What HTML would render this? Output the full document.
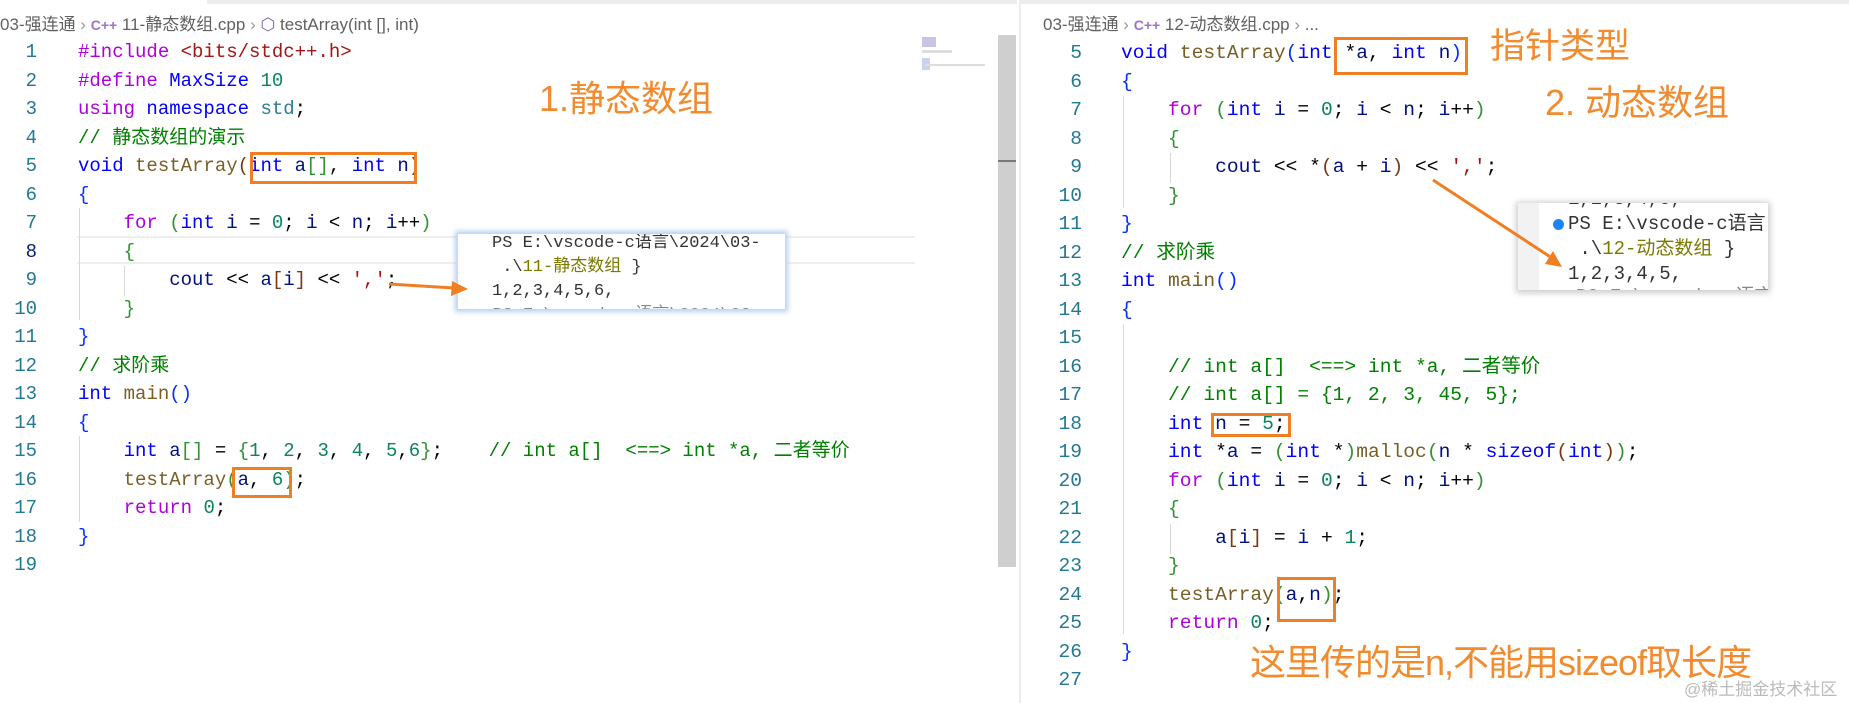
<!DOCTYPE html>
<html><head><meta charset="utf-8"><style>
*{margin:0;padding:0;box-sizing:border-box}
body{width:1849px;height:703px;background:#fff;position:relative;overflow:hidden;font-family:"Liberation Sans","Noto Sans CJK SC",sans-serif}
.ln{position:absolute;font-family:"Liberation Mono","Noto Sans CJK SC",monospace;font-size:19px;color:#237893;text-align:right;width:40px;line-height:28px}
.cd{position:absolute;font-family:"Liberation Mono","Noto Sans CJK SC",monospace;font-size:19px;color:#000;white-space:pre;line-height:28px}
.r .cd,.r .ln{font-size:19.6px}
.k{color:#0000ff}.c{color:#af00db}.f{color:#795e26}.v{color:#001080}.n{color:#098658}.s{color:#a31515}.m{color:#008000}.t{color:#267f99}
.b1{color:#0431fa}.b2{color:#319331}.b3{color:#7b3814}
.box{position:absolute;border:3px solid #f07f24}
.ann{position:absolute;color:#f28a2e;font-family:"Liberation Sans","Noto Sans CJK SC",sans-serif;white-space:nowrap}
.crumb{position:absolute;top:10px;font-size:17px;color:#616161;white-space:nowrap}
.guide{position:absolute;width:1px;background:#d8d8d8}
.term{position:absolute;background:#fff;overflow:hidden;font-family:"Liberation Mono","Noto Sans CJK SC",monospace;font-size:17px;color:#333;white-space:pre;line-height:24px}
</style></head><body>
<div style="position:absolute;left:207px;top:0;width:810px;height:4px;background:#ececec"></div>
<div style="position:absolute;left:1021px;top:0;width:828px;height:4px;background:#ececec"></div>
<div class="crumb" style="left:0">03-强连通 <span style="color:#999">›</span> <b style="color:#a074c4;font-size:14px">C++</b> 11-静态数组.cpp <span style="color:#999">›</span> <span style="color:#7a5fb0">⬡</span> testArray(int [], int)</div>
<div class="crumb" style="left:1043px">03-强连通 <span style="color:#999">›</span> <b style="color:#a074c4;font-size:14px">C++</b> 12-动态数组.cpp <span style="color:#999">›</span> ...</div>

<div style="position:absolute;left:998px;top:35px;width:18px;height:532px;background:#cfcfcf"></div>
<div style="position:absolute;left:998px;top:160px;width:18px;height:2px;background:#777"></div>
<div style="position:absolute;left:1019px;top:0;width:2px;height:703px;background:#ececec"></div>
<div style="position:absolute;left:922px;top:37px;width:14px;height:10px;background:#c9c3e6"></div>
<div style="position:absolute;left:922px;top:50px;width:30px;height:3px;background:#ddd"></div>
<div style="position:absolute;left:922px;top:58px;width:8px;height:12px;background:#c9d3ec"></div>
<div style="position:absolute;left:925px;top:64px;width:60px;height:2px;background:#ddd"></div>

<div style="position:absolute;left:77px;top:236px;width:838px;height:2px;background:#eee"></div>
<div style="position:absolute;left:77px;top:262px;width:838px;height:2px;background:#eee"></div>

<div class="guide" style="left:79px;top:208px;height:112px"></div>
<div class="guide" style="left:124px;top:266px;height:30px"></div>
<div class="guide" style="left:79px;top:436px;height:86px"></div>
<div class="guide" style="left:1123px;top:96px;height:112px"></div>
<div class="guide" style="left:1170px;top:153px;height:30px"></div>
<div class="guide" style="left:1123px;top:324px;height:310px"></div>
<div class="guide" style="left:1170px;top:524px;height:30px"></div>

<div>
<div class="ln" style="left:-3px;top:38px">1</div><div class="cd" style="left:78px;top:38px"><span class="c">#include</span> <span class="s">&lt;bits/stdc++.h&gt;</span></div>
<div class="ln" style="left:-3px;top:66.5px">2</div><div class="cd" style="left:78px;top:66.5px"><span class="c">#define</span> <span class="k">MaxSize</span> <span class="n">10</span></div>
<div class="ln" style="left:-3px;top:95px">3</div><div class="cd" style="left:78px;top:95px"><span class="c">using</span> <span class="k">namespace</span> <span class="t">std</span>;</div>
<div class="ln" style="left:-3px;top:123.5px">4</div><div class="cd" style="left:78px;top:123.5px"><span class="m">// 静态数组的演示</span></div>
<div class="ln" style="left:-3px;top:152px">5</div><div class="cd" style="left:78px;top:152px"><span class="k">void</span> <span class="f">testArray</span><span class="b3">(</span><span class="k">int</span> <span class="v">a</span><span class="b2">[]</span>, <span class="k">int</span> <span class="v">n</span><span class="b3">)</span></div>
<div class="ln" style="left:-3px;top:180.5px">6</div><div class="cd" style="left:78px;top:180.5px"><span class="b1">{</span></div>
<div class="ln" style="left:-3px;top:209px">7</div><div class="cd" style="left:78px;top:209px">    <span class="c">for</span> <span class="b2">(</span><span class="k">int</span> <span class="v">i</span> = <span class="n">0</span>; <span class="v">i</span> &lt; <span class="v">n</span>; <span class="v">i</span>++<span class="b2">)</span></div>
<div class="ln" style="left:-3px;top:237.5px;color:#0b216f">8</div><div class="cd" style="left:78px;top:237.5px">    <span class="b2">{</span></div>
<div class="ln" style="left:-3px;top:266px">9</div><div class="cd" style="left:78px;top:266px">        <span class="v">cout</span> &lt;&lt; <span class="v">a</span><span class="b3">[</span><span class="v">i</span><span class="b3">]</span> &lt;&lt; <span class="s">','</span>;</div>
<div class="ln" style="left:-3px;top:294.5px">10</div><div class="cd" style="left:78px;top:294.5px">    <span class="b2">}</span></div>
<div class="ln" style="left:-3px;top:323px">11</div><div class="cd" style="left:78px;top:323px"><span class="b1">}</span></div>
<div class="ln" style="left:-3px;top:351.5px">12</div><div class="cd" style="left:78px;top:351.5px"><span class="m">// 求阶乘</span></div>
<div class="ln" style="left:-3px;top:380px">13</div><div class="cd" style="left:78px;top:380px"><span class="k">int</span> <span class="f">main</span><span class="b1">()</span></div>
<div class="ln" style="left:-3px;top:408.5px">14</div><div class="cd" style="left:78px;top:408.5px"><span class="b1">{</span></div>
<div class="ln" style="left:-3px;top:437px">15</div><div class="cd" style="left:78px;top:437px">    <span class="k">int</span> <span class="v">a</span><span class="b2">[]</span> = <span class="b2">{</span><span class="n">1</span>, <span class="n">2</span>, <span class="n">3</span>, <span class="n">4</span>, <span class="n">5</span>,<span class="n">6</span><span class="b2">}</span>;    <span class="m">// int a[]  &lt;==&gt; int *a, 二者等价</span></div>
<div class="ln" style="left:-3px;top:465.5px">16</div><div class="cd" style="left:78px;top:465.5px">    <span class="f">testArray</span><span class="b2">(</span><span class="v">a</span>, <span class="n">6</span><span class="b2">)</span>;</div>
<div class="ln" style="left:-3px;top:494px">17</div><div class="cd" style="left:78px;top:494px">    <span class="c">return</span> <span class="n">0</span>;</div>
<div class="ln" style="left:-3px;top:522.5px">18</div><div class="cd" style="left:78px;top:522.5px"><span class="b1">}</span></div>
<div class="ln" style="left:-3px;top:551px">19</div>
</div>

<div class="r">
<div class="ln" style="left:1042px;top:39px">5</div><div class="cd" style="left:1121px;top:39px"><span class="k">void</span> <span class="f">testArray</span><span class="b1">(</span><span class="k">int</span> *<span class="v">a</span>, <span class="k">int</span> <span class="v">n</span><span class="b1">)</span></div>
<div class="ln" style="left:1042px;top:67.5px">6</div><div class="cd" style="left:1121px;top:67.5px"><span class="b1">{</span></div>
<div class="ln" style="left:1042px;top:96px">7</div><div class="cd" style="left:1121px;top:96px">    <span class="c">for</span> <span class="b2">(</span><span class="k">int</span> <span class="v">i</span> = <span class="n">0</span>; <span class="v">i</span> &lt; <span class="v">n</span>; <span class="v">i</span>++<span class="b2">)</span></div>
<div class="ln" style="left:1042px;top:124.5px">8</div><div class="cd" style="left:1121px;top:124.5px">    <span class="b2">{</span></div>
<div class="ln" style="left:1042px;top:153px">9</div><div class="cd" style="left:1121px;top:153px">        <span class="v">cout</span> &lt;&lt; *<span class="b3">(</span><span class="v">a</span> + <span class="v">i</span><span class="b3">)</span> &lt;&lt; <span class="s">','</span>;</div>
<div class="ln" style="left:1042px;top:181.5px">10</div><div class="cd" style="left:1121px;top:181.5px">    <span class="b2">}</span></div>
<div class="ln" style="left:1042px;top:210px">11</div><div class="cd" style="left:1121px;top:210px"><span class="b1">}</span></div>
<div class="ln" style="left:1042px;top:238.5px">12</div><div class="cd" style="left:1121px;top:238.5px"><span class="m">// 求阶乘</span></div>
<div class="ln" style="left:1042px;top:267px">13</div><div class="cd" style="left:1121px;top:267px"><span class="k">int</span> <span class="f">main</span><span class="b1">()</span></div>
<div class="ln" style="left:1042px;top:295.5px">14</div><div class="cd" style="left:1121px;top:295.5px"><span class="b1">{</span></div>
<div class="ln" style="left:1042px;top:324px">15</div>
<div class="ln" style="left:1042px;top:352.5px">16</div><div class="cd" style="left:1121px;top:352.5px">    <span class="m">// int a[]  &lt;==&gt; int *a, 二者等价</span></div>
<div class="ln" style="left:1042px;top:381px">17</div><div class="cd" style="left:1121px;top:381px">    <span class="m">// int a[] = {1, 2, 3, 45, 5};</span></div>
<div class="ln" style="left:1042px;top:409.5px">18</div><div class="cd" style="left:1121px;top:409.5px">    <span class="k">int</span> <span class="v">n</span> = <span class="n">5</span>;</div>
<div class="ln" style="left:1042px;top:438px">19</div><div class="cd" style="left:1121px;top:438px">    <span class="k">int</span> *<span class="v">a</span> = <span class="b2">(</span><span class="k">int</span> *<span class="b2">)</span><span class="f">malloc</span><span class="b2">(</span><span class="v">n</span> * <span class="k">sizeof</span><span class="b3">(</span><span class="k">int</span><span class="b3">)</span><span class="b2">)</span>;</div>
<div class="ln" style="left:1042px;top:466.5px">20</div><div class="cd" style="left:1121px;top:466.5px">    <span class="c">for</span> <span class="b2">(</span><span class="k">int</span> <span class="v">i</span> = <span class="n">0</span>; <span class="v">i</span> &lt; <span class="v">n</span>; <span class="v">i</span>++<span class="b2">)</span></div>
<div class="ln" style="left:1042px;top:495px">21</div><div class="cd" style="left:1121px;top:495px">    <span class="b2">{</span></div>
<div class="ln" style="left:1042px;top:523.5px">22</div><div class="cd" style="left:1121px;top:523.5px">        <span class="v">a</span><span class="b3">[</span><span class="v">i</span><span class="b3">]</span> = <span class="v">i</span> + <span class="n">1</span>;</div>
<div class="ln" style="left:1042px;top:552px">23</div><div class="cd" style="left:1121px;top:552px">    <span class="b2">}</span></div>
<div class="ln" style="left:1042px;top:580.5px">24</div><div class="cd" style="left:1121px;top:580.5px">    <span class="f">testArray</span><span class="b2">(</span><span class="v">a</span>,<span class="v">n</span><span class="b2">)</span>;</div>
<div class="ln" style="left:1042px;top:609px">25</div><div class="cd" style="left:1121px;top:609px">    <span class="c">return</span> <span class="n">0</span>;</div>
<div class="ln" style="left:1042px;top:637.5px">26</div><div class="cd" style="left:1121px;top:637.5px"><span class="b1">}</span></div>
<div class="ln" style="left:1042px;top:666px">27</div>
</div>

<div class="box" style="left:250px;top:152px;width:167px;height:32px"></div>
<div class="box" style="left:232px;top:467px;width:60px;height:31px"></div>
<div class="box" style="left:1334px;top:37px;width:134px;height:38px"></div>
<div class="box" style="left:1211px;top:413px;width:80px;height:24px"></div>
<div class="box" style="left:1277px;top:577px;width:59px;height:45px"></div>

<div class="term" style="left:457px;top:233px;width:329px;height:77px;box-shadow:0 0 5px 2px #b9cff3;border:1px solid #c7d8f5">
<div style="position:absolute;left:34px;top:-2px">PS E:\vscode-c语言\2024\03-</div>
<div style="position:absolute;left:34px;top:22px"> .\<span style="color:#7a7a00">11-静态数组</span> }</div>
<div style="position:absolute;left:34px;top:46px">1,2,3,4,5,6,</div>
<div style="position:absolute;left:14px;top:70px;color:#888">○ PS E:\vscode-c语言\2024\03</div>
</div>
<div class="term" style="left:1518px;top:203px;width:250px;height:87px;box-shadow:0 1px 6px 2px #ccc;font-size:19px;line-height:26px">
<div style="position:absolute;left:0;top:0;width:21px;height:87px;background:#f2f2f2"></div>
<div style="position:absolute;left:50px;top:-17px">1,2,3,4,5,</div>
<div style="position:absolute;left:35px;top:16px;width:11px;height:11px;border-radius:50%;background:#1a85ff"></div>
<div style="position:absolute;left:50px;top:8px">PS E:\vscode-c语言</div>
<div style="position:absolute;left:50px;top:33px"> .\<span style="color:#7a7a00">12-动态数组</span> }</div>
<div style="position:absolute;left:50px;top:58px">1,2,3,4,5,</div>
<div style="position:absolute;left:35px;top:81px;color:#888">○ PS E:\vscode-c语言</div>
</div>

<svg style="position:absolute;left:0;top:0" width="1849" height="703">
<line x1="389" y1="284" x2="454" y2="288" stroke="#f07f24" stroke-width="3"/>
<polygon points="468,289 452,281 451,296" fill="#f07f24"/>
<line x1="1433" y1="180" x2="1552" y2="258" stroke="#f07f24" stroke-width="3"/>
<polygon points="1562,267 1545,264 1553,251" fill="#f07f24"/>
</svg>

<div class="ann" style="left:539px;top:70px;font-size:36px">1.静态数组</div>
<div class="ann" style="left:1490px;top:18px;font-size:35px">指针类型</div>
<div class="ann" style="left:1545px;top:74px;font-size:36px">2. 动态数组</div>
<div class="ann" style="left:1250px;top:634px;font-size:36px;letter-spacing:-1px">这里传的是n,不能用sizeof取长度</div>
<div style="position:absolute;left:1684px;top:675px;font-size:17px;color:#bbb;white-space:nowrap">@稀土掘金技术社区</div>
</body></html>
